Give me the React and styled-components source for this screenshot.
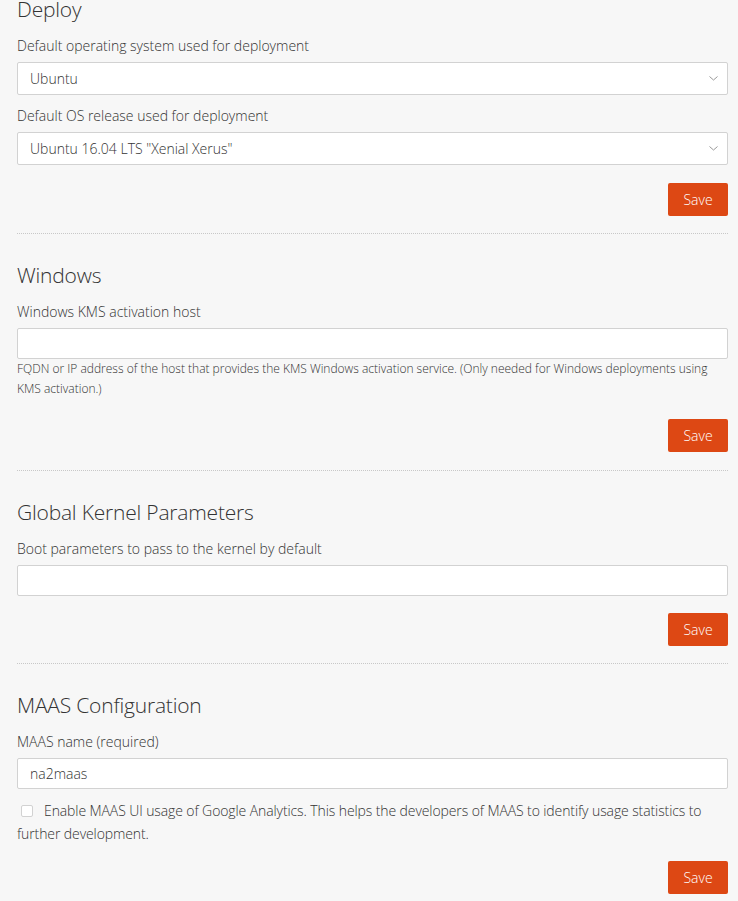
import React from 'react';
import styled, { createGlobalStyle } from 'styled-components';

const GlobalStyle = createGlobalStyle`
  html, body {
    margin: 0;
    padding: 0;
    background: #f7f7f7;
  }
  body {
    font-family: "Open Sans", "Liberation Sans", sans-serif;
    color: #333;
  }
`;

const Page = styled.div`
  padding: 0 10px 0 17px;
  margin-top: -5px;
`;

const Section = styled.section`
  padding: ${(p) => (p.$first ? '0' : '27px')} 0 ${(p) => p.$bottom || 17}px;
  border-bottom: ${(p) => (p.$last ? 'none' : '1px dotted #c8c8c8')};
`;

const Heading = styled.h2`
  margin: 0 0 13px;
  font-size: 21px;
  line-height: 28px;
  font-weight: 300;
  letter-spacing: -0.2px;
  color: #333;
`;

const Field = styled.div`
  margin-bottom: 11px;
`;

const Label = styled.label`
  display: block;
  margin-bottom: 6px;
  font-size: 14px;
  line-height: 20px;
  font-weight: 300;
`;

const SelectBox = styled.div`
  position: relative;
  display: flex;
  align-items: center;
  box-sizing: border-box;
  height: 33px;
  padding: 0 12px;
  background: #fff;
  border: 1px solid #d2d2d2;
  border-radius: 2px;
  font-size: 14px;
  font-weight: 300;
`;

const Chevron = styled.svg`
  position: absolute;
  right: 9px;
  top: 13px;
`;

const TextInput = styled.input`
  display: block;
  width: 100%;
  box-sizing: border-box;
  height: 31px;
  padding: 0 12px;
  margin: 0;
  background: #fff;
  border: 1px solid #d2d2d2;
  border-radius: 2px;
  font-family: inherit;
  font-size: 14px;
  font-weight: 300;
  color: #333;
  outline: none;
`;

const Help = styled.p`
  margin: 0;
  font-size: 12px;
  line-height: 20px;
  font-weight: 300;
`;

const CheckLine = styled.p`
  margin: 10px 0 0;
  font-size: 14px;
  line-height: 23px;
  font-weight: 300;
  letter-spacing: -0.1px;
`;

const Box = styled.span`
  display: inline-block;
  box-sizing: border-box;
  width: 12px;
  height: 12px;
  margin: 0 11px 0 4px;
  vertical-align: -1px;
  background: #fff;
  border: 1px solid #d2d2d2;
  border-radius: 2px;
`;

const Actions = styled.div`
  display: flex;
  justify-content: flex-end;
  margin-top: ${(p) => p.$gap || 18}px;
`;

const SaveButton = styled.button`
  width: 60px;
  height: 33px;
  padding: 0;
  border: none;
  border-radius: 2px;
  background: #dd4814;
  color: #fff;
  font-family: inherit;
  font-size: 14px;
  font-weight: 300;
  cursor: pointer;
`;

function Select({ value }) {
  return (
    <SelectBox>
      {value}
      <Chevron width="9" height="5" viewBox="0 0 9 5">
        <path d="M0.5 0.5 L4.5 4 L8.5 0.5" fill="none" stroke="#999" strokeWidth="1" />
      </Chevron>
    </SelectBox>
  );
}

export default function App() {
  return (
    <>
      <GlobalStyle />
      <Page>
        <Section $first>
          <Heading>Deploy</Heading>
          <Field>
            <Label>Default operating system used for deployment</Label>
            <Select value="Ubuntu" />
          </Field>
          <Field>
            <Label>Default OS release used for deployment</Label>
            <Select value={'Ubuntu 16.04 LTS "Xenial Xerus"'} />
          </Field>
          <Actions>
            <SaveButton type="button">Save</SaveButton>
          </Actions>
        </Section>

        <Section $bottom={18}>
          <Heading>Windows</Heading>
          <Field>
            <Label>Windows KMS activation host</Label>
            <TextInput type="text" defaultValue="" />
            <Help>
              FQDN or IP address of the host that provides the KMS Windows activation service. (Only needed for Windows deployments using KMS activation.)
            </Help>
          </Field>
          <Actions $gap={20}>
            <SaveButton type="button">Save</SaveButton>
          </Actions>
        </Section>

        <Section>
          <Heading>Global Kernel Parameters</Heading>
          <Field>
            <Label>Boot parameters to pass to the kernel by default</Label>
            <TextInput type="text" defaultValue="" />
          </Field>
          <Actions $gap={17}>
            <SaveButton type="button">Save</SaveButton>
          </Actions>
        </Section>

        <Section $last>
          <Heading>MAAS Configuration</Heading>
          <Field>
            <Label>MAAS name (required)</Label>
            <TextInput type="text" defaultValue="na2maas" />
            <CheckLine>
              <Box />
              Enable MAAS UI usage of Google Analytics. This helps the developers of MAAS to identify usage statistics to further development.
            </CheckLine>
          </Field>
          <Actions $gap={16}>
            <SaveButton type="button">Save</SaveButton>
          </Actions>
        </Section>
      </Page>
    </>
  );
}
